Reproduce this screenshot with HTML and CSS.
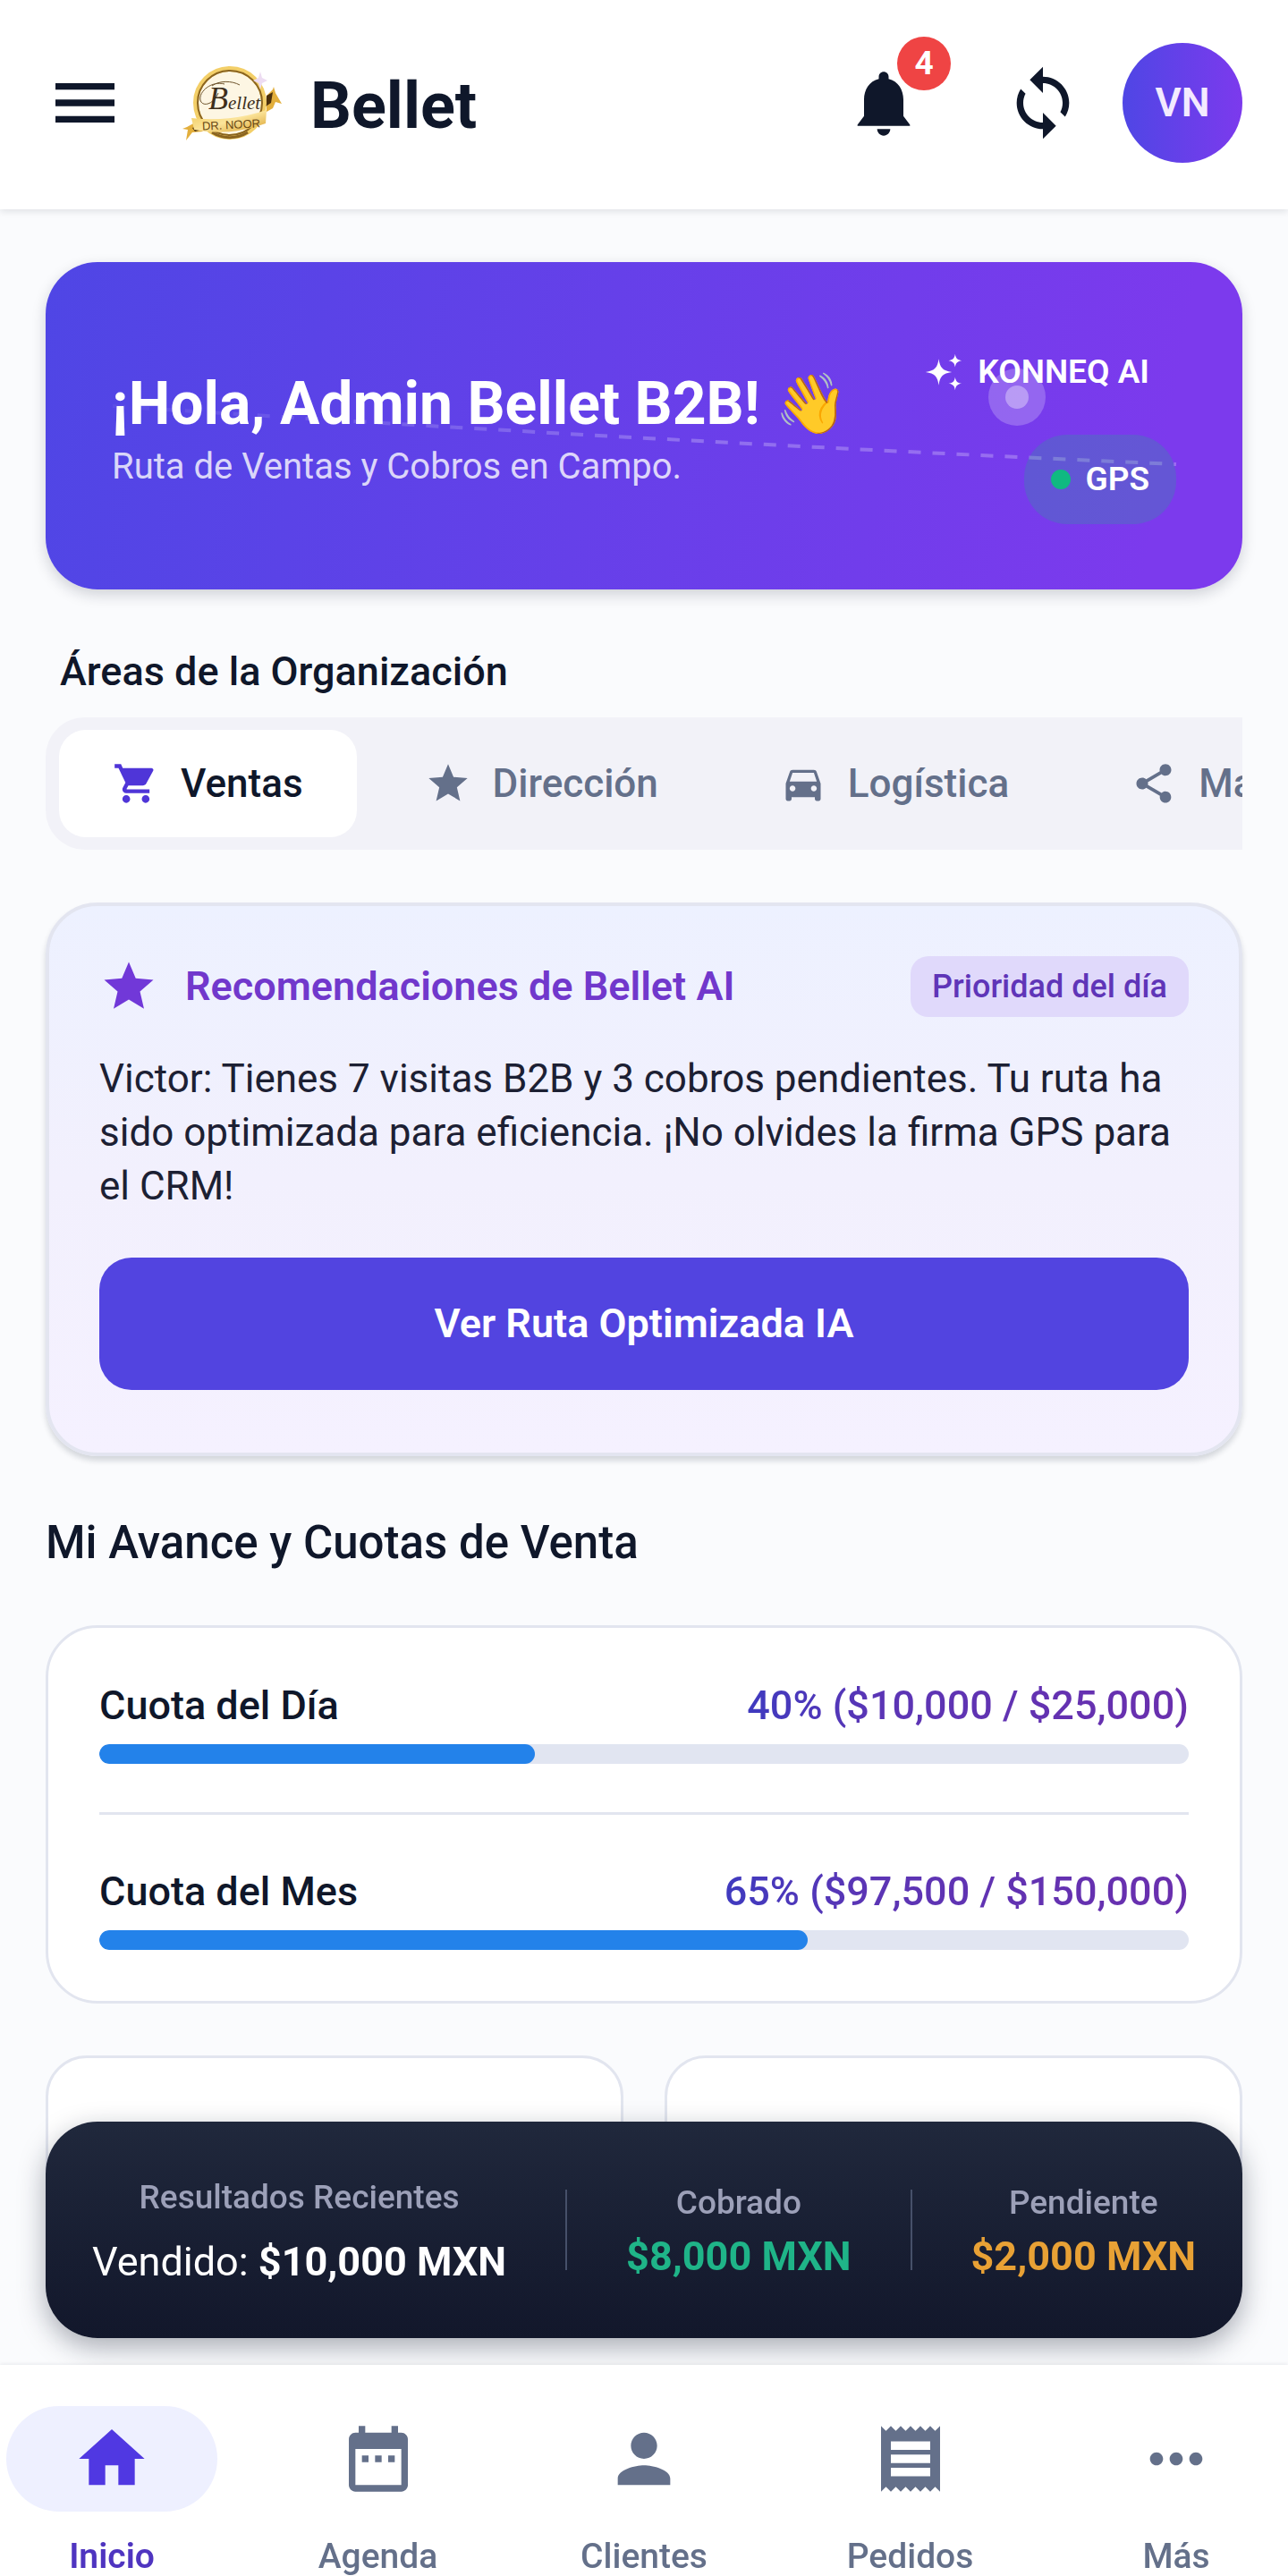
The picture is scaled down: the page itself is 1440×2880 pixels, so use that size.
FILE: index.html
```
<!doctype html>
<html lang="es">
<head>
	<meta charset="UTF-8">
	<meta name="viewport" content="width=device-width, initial-scale=1">
	<title>Bellet</title>
	<link rel="stylesheet" href="styles.css">
</head>
<body>

<svg class="sprite" xmlns="http://www.w3.org/2000/svg">
	<symbol id="icon-menu" viewBox="0 0 24 24">
		<path d="M3 18h18v-2H3v2zm0-5h18v-2H3v2zm0-7v2h18V6H3z"/>
	</symbol>
	<symbol id="icon-bell" viewBox="0 0 24 24">
		<path d="M12 22c1.1 0 2-.9 2-2h-4c0 1.1.9 2 2 2zm6-6v-5c0-3.07-1.63-5.64-4.5-6.32V4c0-.83-.67-1.5-1.5-1.5s-1.5.67-1.5 1.500v.68C7.64 5.36 6 7.92 6 11v5l-2 2.700V19h16v-.3L18 16z"/>
	</symbol>
	<symbol id="icon-sync" viewBox="0 0 24 24">
		<path d="M12 4V1L8 5l4 4V6c3.31 0 6 2.69 6 6 0 1.01-.25 1.97-.7 2.8l1.46 1.46C19.54 15.03 20 13.57 20 12c0-4.42-3.58-8-8-8zm0 14c-3.31 0-6-2.69-6-6 0-1.01.25-1.97.7-2.8L5.24 7.74C4.46 8.97 4 10.43 4 12c0 4.42 3.58 8 8 8v3l4-4-4-4v3z"/>
	</symbol>
	<symbol id="icon-sparkle" viewBox="0 0 24 24">
		<path d="M9 4c.7 5.200 2.300 7.200 8 8-5.700.8-7.300 2.800-8 8-.7-5.200-2.300-7.200-8-8 5.700-.8 7.300-2.800 8-8zM19 1c.4 2.600 1.300 3.600 4 4-2.700.4-3.600 1.400-4 4-.4-2.600-1.300-3.600-4-4 2.700-.4 3.600-1.400 4-4zM19 15c.4 2.600 1.300 3.600 4 4-2.700.4-3.600 1.400-4 4-.4-2.600-1.300-3.600-4-4 2.700-.4 3.600-1.400 4-4z"/>
	</symbol>
	<symbol id="icon-cart" viewBox="0 0 24 24">
		<path d="M7 18c-1.100 0-1.990.9-1.990 2S5.900 22 7 22s2-.9 2-2-.9-2-2-2zM1 2v2h2l3.600 7.590-1.350 2.450c-.16.280-.25.610-.25.960 0 1.100.9 2 2 2h12v-2H7.420c-.14 0-.25-.11-.25-.25l.03-.12.900-1.630h7.450c.75 0 1.410-.41 1.750-1.030l3.580-6.490c.08-.14.120-.31.120-.48 0-.55-.45-1-1-1H5.210l-.94-2H1zm16 16c-1.100 0-1.990.9-1.990 2s.89 2 1.990 2 2-.9 2-2-.9-2-2-2z"/>
	</symbol>
	<symbol id="icon-star" viewBox="0 0 24 24">
		<path d="M12 17.270L18.180 21l-1.640-7.030L22 9.240l-7.190-.61L12 2 9.190 8.630 2 9.240l5.460 4.730L5.820 21z"/>
	</symbol>
	<symbol id="icon-car" viewBox="0 0 24 24">
		<path d="M18.920 6.010C18.720 5.420 18.160 5 17.500 5h-11c-.66 0-1.210.42-1.420 1.010L3 12v8c0 .55.45 1 1 1h1c.55 0 1-.45 1-1v-1h12v1c0 .55.45 1 1 1h1c.55 0 1-.45 1-1v-8l-2.080-5.990zM6.500 16c-.83 0-1.500-.67-1.500-1.500S5.670 13 6.500 13s1.500.67 1.500 1.500S7.330 16 6.500 16zm11 0c-.83 0-1.500-.67-1.500-1.500s.67-1.500 1.500-1.500 1.500.67 1.500 1.500-.67 1.500-1.500 1.500zM5 11l1.500-4.500h11L19 11H5z"/>
	</symbol>
	<symbol id="icon-share" viewBox="0 0 24 24">
		<path d="M18 16.080c-.76 0-1.440.3-1.960.77L8.910 12.700c.05-.23.090-.46.090-.7s-.04-.47-.09-.7l7.050-4.110c.54.500 1.250.810 2.040.810 1.660 0 3-1.340 3-3s-1.340-3-3-3-3 1.340-3 3c0 .24.040.47.090.7L8.040 9.810C7.500 9.310 6.790 9 6 9c-1.660 0-3 1.340-3 3s1.340 3 3 3c.79 0 1.500-.31 2.040-.81l7.120 4.160c-.05.210-.08.430-.08.650 0 1.610 1.310 2.920 2.920 2.920s2.920-1.310 2.920-2.920-1.310-2.920-2.920-2.920z"/>
	</symbol>
	<symbol id="icon-home" viewBox="0 0 24 24">
		<path d="M10 20v-6h4v6h5v-8h3L12 3 2 12h3v8z"/>
	</symbol>
	<symbol id="icon-calendar" viewBox="0 0 24 24">
		<path d="M9 11H7v2h2v-2zm4 0h-2v2h2v-2zm4 0h-2v2h2v-2zm2-7h-1V2h-2v2H8V2H6v2H5c-1.110 0-1.990.9-1.990 2L3 20c0 1.100.89 2 2 2h14c1.100 0 2-.9 2-2V6c0-1.100-.9-2-2-2zm0 16H5V9h14v11z"/>
	</symbol>
	<symbol id="icon-person" viewBox="0 0 24 24">
		<path d="M12 12c2.210 0 4-1.790 4-4s-1.790-4-4-4-4 1.790-4 4 1.790 4 4 4zm0 2c-2.670 0-8 1.340-8 4v2h16v-2c0-2.660-5.330-4-8-4z"/>
	</symbol>
	<symbol id="icon-receipt" viewBox="0 0 24 24">
		<path fill-rule="evenodd" d="M3 2l1.500 1.500L6 2l1.500 1.500L9 2l1.500 1.500L12 2l1.500 1.500L15 2l1.500 1.500L18 2l1.500 1.500L21 2v20l-1.500-1.500L18 22l-1.500-1.500L15 22l-1.500-1.500L12 22l-1.500-1.500L9 22l-1.500-1.500L6 22l-1.500-1.500L3 22zM6 6.700v2.600h12V6.700zM6 10.700v2.600h12v-2.600zM6 14.700v2.600h12v-2.600z"/>
	</symbol>
	<symbol id="icon-more" viewBox="0 0 24 24">
		<path d="M6 10c-1.100 0-2 .9-2 2s.9 2 2 2 2-.9 2-2-.9-2-2-2zm12 0c-1.100 0-2 .9-2 2s.9 2 2 2 2-.9 2-2-.9-2-2-2zm-6 0c-1.100 0-2 .9-2 2s.9 2 2 2 2-.9 2-2-.9-2-2-2z"/>
	</symbol>
</svg>

<header class="header">
	<button class="header__menu" type="button" aria-label="Menú">
		<svg class="icon"><use href="#icon-menu"/></svg>
	</button>
	<svg class="header__logo" viewBox="0 0 120 100" role="img" aria-label="Bellet Dr. Noor">
		<defs>
			<linearGradient id="gold" x1="0" y1="0" x2="1" y2="1">
				<stop offset="0" stop-color="#f0c95a"/>
				<stop offset=".5" stop-color="#fbe49a"/>
				<stop offset="1" stop-color="#d9a02c"/>
			</linearGradient>
		</defs>
		<path d="M99 42l7-7 1-3 2 7 7 12-7-2-3 7-7 4z" fill="#e3af3c"/>
		<path d="M99 42l7-4-2 12-6 4z" fill="#4a2f0c"/>
		<path d="M19 72l-9 5-5 2 6 1-2 12 7-9 12-1z" fill="#e3af3c"/>
		<path d="M16 78l12-5 3 6-12 3z" fill="#4a2f0c"/>
		<circle cx="58" cy="50" r="38" fill="#fdf6e3" stroke="#f3cf68" stroke-width="6"/>
		<circle cx="58" cy="50" r="36" fill="none" stroke="#8a6420" stroke-width="2"/>
		<path d="M38 83a38 38 0 0 0 40 0" fill="none" stroke="#8a6420" stroke-width="3"/>
		<path d="M15 67q43 5 84-9l-1 15q-41 15-80 7z" fill="url(#gold)"/>
		<path d="M52 29c-14-4-29 8-27 18 2 8 15 5 20-8M38 31c8-6 22-6 31-1" fill="none" stroke="#6d532b" stroke-width="1"/>
		<text class="logo__script" x="34" y="57" font-size="36">B</text>
		<text class="logo__script" x="56" y="57" font-size="21">ellet</text>
		<text class="logo__ribbon" x="27" y="79" font-size="13" transform="rotate(-3 58 76)">DR. NOOR</text>
		<path d="M92 15l2 7 6 3-6 3-2 7-2-7-6-3 6-3z" fill="#eddcf2"/>
	</svg>
	<h1 class="header__title">Bellet</h1>
	<div class="header__actions">
		<button class="header__action" type="button" aria-label="Notificaciones">
			<svg class="icon"><use href="#icon-bell"/></svg>
			<span class="header__badge">4</span>
		</button>
		<button class="header__action" type="button" aria-label="Sincronizar">
			<svg class="icon"><use href="#icon-sync"/></svg>
		</button>
		<button class="avatar" type="button">VN</button>
	</div>
</header>

<main class="content">

	<section class="hero">
		<svg class="hero__route" viewBox="0 0 1338 366" aria-hidden="true">
			<defs>
				<linearGradient id="route" gradientUnits="userSpaceOnUse" x1="75" y1="0" x2="720" y2="0">
					<stop offset="0" stop-color="#fff" stop-opacity=".05"/>
					<stop offset="1" stop-color="#fff" stop-opacity=".25"/>
				</linearGradient>
			</defs>
			<path d="M75 161Q670 200 1264 226" fill="none" stroke="url(#route)" stroke-width="4" stroke-dasharray="14 13"/>
			<circle cx="1086" cy="151" r="32" fill="#fff" fill-opacity=".22"/>
			<circle cx="1086" cy="151" r="13" fill="#fff" fill-opacity=".35"/>
		</svg>
		<div class="hero__text">
			<h2 class="hero__title">¡Hola, Admin Bellet B2B! 👋</h2>
			<p class="hero__sub">Ruta de Ventas y Cobros en Campo.</p>
		</div>
		<div class="hero__chips">
			<span class="chip"><svg class="icon icon_chip"><use href="#icon-sparkle"/></svg>KONNEQ AI</span>
			<span class="chip chip_gps"><i class="chip__dot"></i>GPS</span>
		</div>
	</section>

	<h2 class="areas__title">Áreas de la Organización</h2>
	<div class="areas" role="tablist">
		<button class="areas__tab areas__tab_active" type="button" role="tab" aria-selected="true"><svg class="icon icon_tab"><use href="#icon-cart"/></svg>Ventas</button>
		<button class="areas__tab" type="button" role="tab"><svg class="icon icon_tab"><use href="#icon-star"/></svg>Dirección</button>
		<button class="areas__tab" type="button" role="tab"><svg class="icon icon_tab"><use href="#icon-car"/></svg>Logística</button>
		<button class="areas__tab" type="button" role="tab"><svg class="icon icon_tab"><use href="#icon-share"/></svg>Marketing</button>
	</div>

	<section class="ai">
		<div class="ai__head">
			<svg class="icon icon_ai"><use href="#icon-star"/></svg>
			<h2 class="ai__title">Recomendaciones de Bellet AI</h2>
			<span class="ai__badge">Prioridad del día</span>
		</div>
		<p class="ai__text">Victor: Tienes 7 visitas B2B y 3 cobros pendientes. Tu ruta ha sido optimizada para eficiencia. ¡No olvides la firma GPS para el CRM!</p>
		<button class="ai__btn" type="button">Ver Ruta Optimizada IA</button>
	</section>

	<h2 class="quota-title">Mi Avance y Cuotas de Venta</h2>
	<section class="card quota">
		<div class="quota__row">
			<div class="quota__line">
				<label for="quota-day">Cuota del Día</label>
				<span class="quota__value">40% ($10,000 / $25,000)</span>
			</div>
			<progress class="quota__bar" id="quota-day" max="100" value="40"></progress>
		</div>
		<div class="quota__row">
			<div class="quota__line">
				<label for="quota-month">Cuota del Mes</label>
				<span class="quota__value">65% ($97,500 / $150,000)</span>
			</div>
			<progress class="quota__bar" id="quota-month" max="100" value="65"></progress>
		</div>
	</section>

	<div class="tiles">
		<div class="card tile"></div>
		<div class="card tile"></div>
	</div>

</main>

<div class="dock">
	<section class="results">
		<div class="results__col results__col_main">
			<span class="results__label">Resultados Recientes</span>
			<span class="results__value">Vendido: <strong>$10,000 MXN</strong></span>
		</div>
		<i class="results__sep"></i>
		<div class="results__col">
			<span class="results__label">Cobrado</span>
			<strong class="results__value results__value_green">$8,000 MXN</strong>
		</div>
		<i class="results__sep"></i>
		<div class="results__col">
			<span class="results__label">Pendiente</span>
			<strong class="results__value results__value_orange">$2,000 MXN</strong>
		</div>
	</section>
	<nav class="nav">
		<a class="nav__item nav__item_active" href="#inicio"><span class="nav__pill"><svg class="icon"><use href="#icon-home"/></svg></span>Inicio</a>
		<a class="nav__item" href="#agenda"><span class="nav__pill"><svg class="icon"><use href="#icon-calendar"/></svg></span>Agenda</a>
		<a class="nav__item" href="#clientes"><span class="nav__pill"><svg class="icon"><use href="#icon-person"/></svg></span>Clientes</a>
		<a class="nav__item" href="#pedidos"><span class="nav__pill"><svg class="icon"><use href="#icon-receipt"/></svg></span>Pedidos</a>
		<a class="nav__item" href="#mas"><span class="nav__pill"><svg class="icon"><use href="#icon-more"/></svg></span>Más</a>
	</nav>
</div>

</body>
</html>
```
FILE: styles.css
```
* {
	margin: 0;
	padding: 0;
	box-sizing: border-box;
}
body {
	background-color: #fafbfd;
	color: #0f172a;
	font-family: Roboto, 'Liberation Sans', sans-serif;
	font-size: 45px;
	line-height: 60px;
}
button {
	border: 0;
	background: none;
	color: inherit;
	font: inherit;
	cursor: pointer;
}
.sprite {
	display: none;
}
.icon {
	display: block;
	flex: none;
	width: 88px;
	height: 88px;
	fill: currentColor;
}
.icon_chip {
	width: 44px;
	height: 44px;
}
.icon_tab {
	width: 52px;
	height: 52px;
}
.icon_ai {
	width: 66px;
	height: 66px;
}

/* header */
.header {
	position: relative;
	display: flex;
	align-items: center;
	padding: 48px 51px 52px;
	background-color: #fff;
	box-shadow: 0 2px 8px rgba(15, 23, 42, .12);
}
.header__menu {
	margin-right: 60px;
}
.header__logo {
	width: 120px;
	height: 100px;
}
.logo__script {
	font-family: 'Liberation Serif', serif;
	font-style: italic;
	fill: #3d2f1c;
}
.logo__ribbon {
	font-family: 'Liberation Sans', sans-serif;
	fill: #6b4a14;
}
.header__title {
	margin-left: 28px;
	padding-top: 8px;
	font-size: 72px;
	line-height: 88px;
	font-weight: bold;
}
.header__actions {
	display: flex;
	align-items: center;
	margin-left: auto;
}
.header__action {
	position: relative;
	display: flex;
	justify-content: center;
	width: 178px;
}
.header__badge {
	position: absolute;
	top: -30px;
	right: 14px;
	width: 60px;
	height: 60px;
	border-radius: 50%;
	background-color: #ef4444;
	color: #fff;
	font-size: 37px;
	font-weight: bold;
}
.avatar {
	width: 134px;
	height: 134px;
	border-radius: 50%;
	background: linear-gradient(90deg, #4f46e5, #7c3aed);
	color: #f3eaff;
	font-weight: 600;
}

.content {
	padding: 59px 51px 0;
}

/* hero */
.hero {
	position: relative;
	display: flex;
	align-items: center;
	justify-content: space-between;
	padding: 73px 74px;
	border-radius: 58px;
	background: linear-gradient(100deg, #4f46e5, #7c3aed 92%);
	box-shadow: 0 6px 16px rgba(15, 23, 42, .18);
	color: #fff;
}
.hero__route {
	position: absolute;
	left: 0;
	top: 0;
	width: 100%;
	height: 100%;
}
.hero__text {
	position: relative;
	padding-top: 8px;
}
.hero__title {
	font-size: 66px;
	line-height: 84px;
	font-weight: bold;
	white-space: nowrap;
}
.hero__sub {
	color: rgba(255, 255, 255, .8);
	font-size: 40px;
	line-height: 56px;
}
.hero__chips {
	position: relative;
	display: flex;
	flex-direction: column;
	align-items: flex-end;
	gap: 20px;
}
.chip {
	display: flex;
	align-items: center;
	gap: 16px;
	padding: 24px 30px;
	border-radius: 48px;
	font-size: 37px;
	line-height: 52px;
	font-weight: 600;
}
.chip_gps {
	background-color: rgba(16, 185, 129, .22);
}
.chip__dot {
	width: 22px;
	height: 22px;
	border-radius: 50%;
	background-color: #10b981;
}

/* areas */
.areas__title {
	margin: 66px 16px 25px;
	font-size: 45px;
	line-height: 52px;
	font-weight: 500;
}
.areas {
	display: flex;
	gap: 16px;
	padding: 14px 0 14px 15px;
	border-radius: 44px 0 0 44px;
	background-color: #f2f2f8;
	overflow: hidden;
}
.areas__tab {
	display: flex;
	flex: none;
	align-items: center;
	gap: 24px;
	padding: 30px 60px;
	border-radius: 30px;
	color: #64708a;
	font-size: 44px;
	font-weight: 500;
}
.areas__tab_active {
	background-color: #fff;
	color: #0f172a;
}
.areas__tab_active .icon {
	color: #4f35d8;
}

/* recommendations */
.ai {
	margin-top: 59px;
	padding: 56px 56px 70px;
	border: 4px solid #e3e5f0;
	border-radius: 58px;
	background: linear-gradient(#edf1ff, #f2f0fd 50%, #f5f1ff);
	box-shadow: 0 5px 6px rgba(15, 23, 42, .16);
}
.ai__head {
	display: flex;
	align-items: center;
}
.ai__head .icon {
	color: #7138d8;
}
.ai__title {
	margin-left: 30px;
	color: #7138cc;
	font-size: 45px;
	font-weight: 600;
}
.ai__badge {
	margin-left: auto;
	padding: 12px 24px;
	border-radius: 20px;
	background-color: #e0d9fb;
	color: #5f35b8;
	font-size: 36px;
	line-height: 44px;
	font-weight: 500;
}
.ai__text {
	margin-top: 39px;
	color: #1c2033;
	font-size: 44px;
}
.ai__btn {
	display: block;
	width: 100%;
	margin-top: 50px;
	padding: 44px;
	border-radius: 36px;
	background-color: #5244e0;
	color: #fff;
	font-weight: 600;
}

/* quotas */
.card {
	border: 3px solid #e2e5ef;
	border-radius: 58px;
	background-color: #fff;
}
.quota-title {
	margin: 67px 0 62px;
	font-size: 51px;
	font-weight: 500;
}
.quota {
	padding: 57px;
}
.quota__row + .quota__row {
	margin-top: 54px;
	padding-top: 56px;
	border-top: 3px solid #e2e5ef;
}
.quota__line {
	display: flex;
	justify-content: space-between;
	margin-bottom: 13px;
	font-weight: 500;
}
.quota__value {
	background: linear-gradient(90deg, #3f3abf, #5b35b5 30%, #6a2fae);
	-webkit-background-clip: text;
	background-clip: text;
	color: transparent;
}
.quota__bar {
	display: block;
	width: 100%;
	height: 22px;
	border: 0;
	border-radius: 11px;
	background-color: #e1e5f1;
	overflow: hidden;
	-webkit-appearance: none;
	appearance: none;
}
.quota__bar::-webkit-progress-bar {
	background-color: #e1e5f1;
}
.quota__bar::-webkit-progress-value {
	border-radius: 11px;
	background-color: #2382ea;
}

.tiles {
	display: grid;
	grid-template-columns: 1fr 1fr;
	gap: 46px;
	margin-top: 58px;
}
.tile {
	height: 280px;
	border-radius: 46px;
}

/* bottom dock */
.dock {
	position: fixed;
	left: 0;
	right: 0;
	bottom: 0;
}
.results {
	display: flex;
	align-items: center;
	justify-content: space-between;
	margin: 0 51px 30px;
	padding: 55px 52px;
	border-radius: 58px;
	background: linear-gradient(#20283c, #12172b);
	box-shadow: 0 10px 30px rgba(15, 23, 42, .35);
	color: #fff;
}
.results__col {
	display: flex;
	flex-direction: column;
	align-items: center;
	white-space: nowrap;
}
.results__col_main {
	gap: 12px;
}
.results__label {
	color: #9ca0b8;
	font-size: 37px;
	font-weight: 500;
}
.results__value_green {
	color: #1fb488;
}
.results__value_orange {
	color: #e8a135;
}
.results__sep {
	width: 2px;
	height: 90px;
	background-color: #465069;
}
.nav {
	position: relative;
	display: flex;
	justify-content: space-between;
	padding: 46px 7px 0;
	background-color: #fff;
	box-shadow: 0 -1px 4px rgba(15, 23, 42, .08);
}
.nav__item {
	display: flex;
	flex-direction: column;
	align-items: center;
	gap: 28px;
	color: #64708a;
	font-size: 39px;
	line-height: 44px;
	font-weight: 500;
	text-decoration: none;
}
.nav__item_active {
	color: #4f35c0;
	font-weight: 600;
}
.nav__item_active .icon {
	color: #5038e2;
}
.nav__pill {
	display: flex;
	align-items: center;
	justify-content: center;
	width: 236px;
	height: 118px;
	border-radius: 59px;
}
.nav__item_active .nav__pill {
	background-color: #eef0ff;
}
```
